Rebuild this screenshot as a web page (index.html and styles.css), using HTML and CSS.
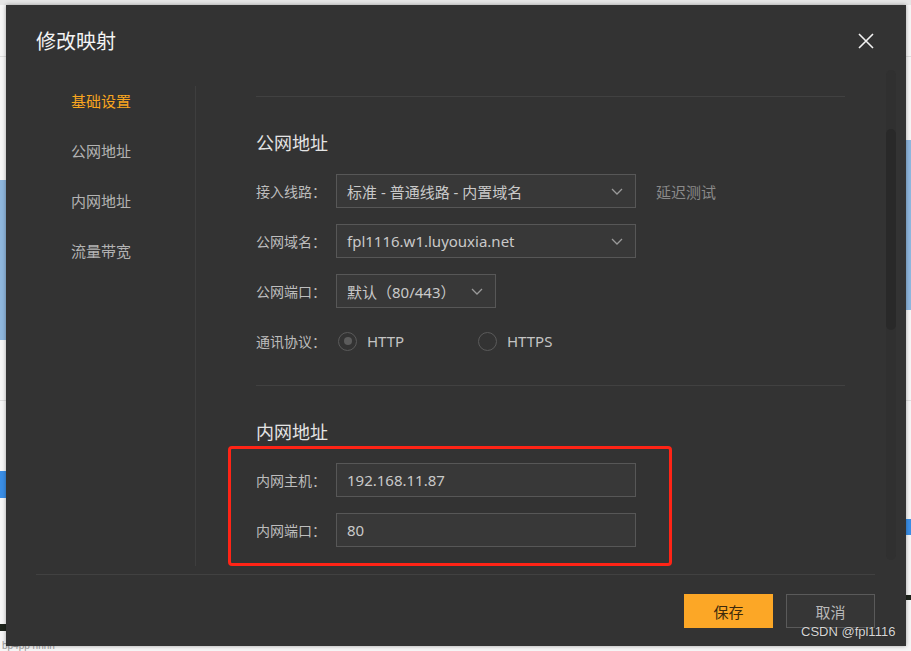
FILE: index.html
```html
<!DOCTYPE html>
<html lang="zh-CN">
<head>
<meta charset="utf-8">
<title>修改映射</title>
<link rel="stylesheet" href="styles.css">
</head>
<body>
<div class="dialog">
  <div class="dlg-head">
    <div class="dlg-title">修改映射</div>
    <svg class="close" width="16" height="16" viewBox="0 0 16 16"><path d="M1 1L15 15M15 1L1 15" stroke="#f2f2f2" stroke-width="1.6" fill="none"/></svg>
  </div>
  <div class="dlg-body">
    <nav class="side">
      <div class="side-item active">基础设置</div>
      <div class="side-item">公网地址</div>
      <div class="side-item">内网地址</div>
      <div class="side-item">流量带宽</div>
    </nav>
    <div class="main">
      <section class="sec first">
        <h2 class="sec-title">公网地址</h2>
        <div class="rows">
          <div class="row">
            <span class="lbl">接入线路：</span>
            <div class="select wide"><span>标准 - 普通线路 - 内置域名</span><svg class="chev" width="12" height="7" viewBox="0 0 12 7"><path d="M1 1L6 6L11 1" stroke="#9a9a9a" stroke-width="1.3" fill="none"/></svg></div>
            <span class="link">延迟测试</span>
          </div>
          <div class="row">
            <span class="lbl">公网域名：</span>
            <div class="select wide"><span>fpl1116.w1.luyouxia.net</span><svg class="chev" width="12" height="7" viewBox="0 0 12 7"><path d="M1 1L6 6L11 1" stroke="#9a9a9a" stroke-width="1.3" fill="none"/></svg></div>
          </div>
          <div class="row">
            <span class="lbl">公网端口：</span>
            <div class="select narrow"><span>默认（80/443）</span><svg class="chev" width="12" height="7" viewBox="0 0 12 7"><path d="M1 1L6 6L11 1" stroke="#9a9a9a" stroke-width="1.3" fill="none"/></svg></div>
          </div>
          <div class="row">
            <span class="lbl">通讯协议：</span>
            <div class="radios">
              <label class="radio"><span class="ring checked"></span><span>HTTP</span></label>
              <label class="radio"><span class="ring"></span><span>HTTPS</span></label>
            </div>
          </div>
        </div>
      </section>
      <section class="sec">
        <h2 class="sec-title">内网地址</h2>
        <div class="rows">
          <div class="row">
            <span class="lbl">内网主机：</span>
            <div class="input">192.168.11.87</div>
          </div>
          <div class="row">
            <span class="lbl">内网端口：</span>
            <div class="input">80</div>
          </div>
        </div>
      </section>
    </div>
    <div class="scroll-track"><div class="scroll-thumb"></div></div>
  </div>
  <div class="dlg-foot">
    <button class="btn primary">保存</button>
    <button class="btn">取消</button>
  </div>
  <div class="mark"></div>
  <div class="watermark">CSDN @fpl1116</div>
</div>
<div class="behind">bp4pp nnnn</div>
</body>
</html>
```

FILE: styles.css
```css
html, body {
  margin: 0;
  padding: 0;
}
body {
  width: 911px;
  height: 651px;
  overflow: hidden;
  position: relative;
  font-family: "Noto Sans", "Noto Sans CJK SC", sans-serif;
  background:
    linear-gradient(#8fb7de, #8fb7de) 0 180px / 6px 160px no-repeat,
    linear-gradient(#3a8ee6, #3a8ee6) 0 471px / 6px 27px no-repeat,
    linear-gradient(#1e241c, #1e241c) 0 624px / 6px 7px no-repeat,
    linear-gradient(#8fb7de, #8fb7de) 906px 140px / 5px 170px no-repeat,
    linear-gradient(#3a8ee6, #3a8ee6) 906px 519px / 5px 16px no-repeat,
    linear-gradient(#1e241c, #1e241c) 906px 595px / 5px 5px no-repeat,
    linear-gradient(#dedede, #dedede) 0 56px / 911px 1px no-repeat,
    linear-gradient(#dedede, #dedede) 0 400px / 911px 1px no-repeat,
    linear-gradient(#e6e6e6, #e6e6e6) 0 0 / 911px 5px no-repeat,
    #f6f6f6;
}

.dialog {
  position: relative;
  margin: 5px 0 0 6px;
  width: 900px;
  height: 641px;
  background: #333333;
  display: flex;
  flex-direction: column;
  box-shadow: 0 0 4px rgba(0,0,0,0.35);
}

.dlg-head {
  height: 72px;
  padding: 0 32px 0 30px;
  display: flex;
  align-items: center;
  justify-content: space-between;
}
.dlg-title {
  color: #f4f4f4;
  font-size: 20px;
  line-height: 28px;
  font-family: "Noto Sans CJK SC", sans-serif;
}
.close { display: block; }

.dlg-body {
  position: relative;
  margin-top: 9px;
  height: 480px;
  display: flex;
}
.side {
  width: 124px;
  padding-left: 65px;
  border-right: 1px solid #3e3e3e;
  display: flex;
  flex-direction: column;
  gap: 20px;
}
.side-item {
  height: 30px;
  line-height: 30px;
  font-size: 15px;
  color: #b3b3b3;
  font-family: "Noto Sans CJK SC", sans-serif;
}
.side-item.active { color: #f8a51f; }

.main {
  flex: 1;
  padding: 10px 61px 0 60px;
  overflow: hidden;
}
.sec {
  border-top: 1px solid #414141;
  padding-top: 33px;
}
.sec.first { padding-bottom: 27px; }
.sec-title {
  margin: 0;
  font-weight: normal;
  font-size: 18px;
  line-height: 24px;
  color: #e4e4e4;
  font-family: "Noto Sans CJK SC", sans-serif;
}
.rows {
  margin-top: 20px;
  display: flex;
  flex-direction: column;
  gap: 16px;
}
.row {
  height: 34px;
  display: flex;
  align-items: center;
}
.lbl {
  width: 80px;
  font-size: 14px;
  color: #bdbdbd;
  font-family: "Noto Sans CJK SC", sans-serif;
}
.select, .input {
  box-sizing: border-box;
  height: 34px;
  border: 1px solid #575757;
  background: #383838;
  color: #c9c9c9;
  font-size: 15px;
  padding: 0 12px 0 10px;
  display: flex;
  align-items: center;
  justify-content: space-between;
}
.select span { white-space: nowrap; }
.wide, .input { width: 300px; }
.narrow { width: 160px; }
.chev { display: block; }
.link {
  margin-left: 20px;
  font-size: 15px;
  color: #8a8a8a;
  font-family: "Noto Sans CJK SC", sans-serif;
}
.radios {
  display: flex;
  padding-left: 2px;
}
.radio {
  width: 140px;
  display: flex;
  align-items: center;
  gap: 10px;
  font-size: 15px;
  color: #c4c4c4;
}
.ring {
  box-sizing: border-box;
  width: 19px;
  height: 19px;
  border-radius: 50%;
  border: 1.5px solid #5a5a5a;
  display: flex;
  align-items: center;
  justify-content: center;
}
.ring.checked::after {
  content: "";
  width: 8px;
  height: 8px;
  border-radius: 50%;
  background: #5c5c5c;
}

.scroll-track {
  position: absolute;
  left: 880px;
  top: -16px;
  width: 10px;
  height: 490px;
  background: #303030;
  border-radius: 5px;
}
.scroll-thumb {
  margin-top: 59px;
  height: 201px;
  background: #292929;
  border-radius: 5px;
}

.dlg-foot {
  margin: 8px 31px 0 30px;
  border-top: 1px solid #414141;
  padding-top: 19px;
  display: flex;
  justify-content: flex-end;
  gap: 13px;
}
.btn {
  width: 89px;
  height: 34px;
  font-size: 15px;
  font-family: "Noto Sans CJK SC", sans-serif;
  border: 1px solid #5a5a5a;
  background: #363636;
  color: #b8b8b8;
  padding: 0;
}
.btn.primary {
  background: #fca726;
  border-color: #fca726;
  color: #3d2a0c;
}

.mark {
  position: absolute;
  left: 222px;
  top: 441px;
  width: 438px;
  height: 114px;
  border: 3.5px solid #ff2416;
  border-radius: 4px;
}
.watermark {
  position: absolute;
  left: 795px;
  top: 619px;
  font-family: "Liberation Sans", sans-serif;
  font-size: 13px;
  color: #d6d6d6;
  text-shadow: 0 0 1px rgba(0,0,0,0.6);
}
.behind {
  position: absolute;
  left: 2px;
  top: 640px;
  font-family: "Liberation Sans", sans-serif;
  font-size: 10px;
  line-height: 11px;
  color: #9a9a9a;
  z-index: -1;
}
```
